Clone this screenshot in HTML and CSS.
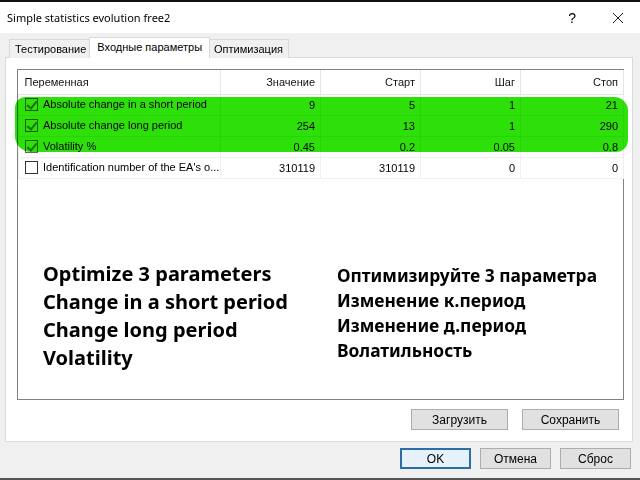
FILE: index.html
```html
<!DOCTYPE html>
<html lang="ru">
<head>
  <meta charset="UTF-8" />
  <title>Simple statistics evolution free2</title>
  <link rel="stylesheet" href="styles.css">
</head>
<body>
  <div class="titlebar">
    <span class="title">Simple statistics evolution free2</span>
    <span class="help">?</span>
    <svg class="close" width="12" height="12" viewBox="0 0 12 12"><path d="M1 1L11 11M11 1L1 11" stroke="#222" stroke-width="1"/></svg>
  </div>

  <div class="tabs">
    <div class="tab">Тестирование</div>
    <div class="tab active">Входные параметры</div>
    <div class="tab">Оптимизация</div>
  </div>

  <div class="panel">
    <div class="list">
      <table>
        <thead>
          <tr>
            <th class="name">Переменная</th>
            <th>Значение</th>
            <th>Старт</th>
            <th>Шаг</th>
            <th>Стоп</th>
          </tr>
        </thead>
        <tbody>
          <tr>
            <td class="name"><span class="chk on"></span>Absolute change in a short period</td>
            <td>9</td><td>5</td><td>1</td><td>21</td>
          </tr>
          <tr>
            <td class="name"><span class="chk on"></span>Absolute change long period</td>
            <td>254</td><td>13</td><td>1</td><td>290</td>
          </tr>
          <tr>
            <td class="name"><span class="chk on"></span>Volatility %</td>
            <td>0.45</td><td>0.2</td><td>0.05</td><td>0.8</td>
          </tr>
          <tr>
            <td class="name"><span class="chk"></span>Identification number of the EA's o...</td>
            <td>310119</td><td>310119</td><td>0</td><td>0</td>
          </tr>
        </tbody>
      </table>

      <div class="marker"></div>

      <div class="note">
        <div class="note-en">
          <div>Optimize 3 parameters</div>
          <div>Change in a short period</div>
          <div>Change long period</div>
          <div>Volatility</div>
        </div>
        <div class="note-ru">
          <div>Оптимизируйте 3 параметра</div>
          <div>Изменение к.период</div>
          <div>Изменение д.период</div>
          <div>Волатильность</div>
        </div>
      </div>
    </div>

    <div class="panel-buttons">
      <button class="btn">Загрузить</button>
      <button class="btn">Сохранить</button>
    </div>
  </div>

  <div class="footer">
    <button class="btn small default">OK</button>
    <button class="btn small">Отмена</button>
    <button class="btn small">Сброс</button>
  </div>

  <div class="bottom-edge"></div>
</body>
</html>
```

FILE: styles.css
```css
* { box-sizing: border-box; }

body {
  margin: 0;
  width: 640px;
  height: 480px;
  overflow: hidden;
  background: #f0f0f0;
  font-family: "Liberation Sans", Arial, sans-serif;
  font-size: 11px;
  color: #000;
  position: relative;
}

.titlebar {
  height: 33px;
  background: #fff;
  border-top: 2px solid #111;
  display: flex;
  align-items: center;
  padding-left: 7px;
}

.title {
  font-family: "Noto Sans", sans-serif;
  font-size: 11px;
  flex: 1;
}

.help {
  font-size: 14px;
  margin-right: 36px;
}

.close {
  margin-right: 16px;
}

.tabs {
  display: flex;
  align-items: flex-end;
  height: 25px;
  padding-left: 9px;
}

.tab {
  height: 19px;
  padding: 0 5px;
  line-height: 18px;
  border: 1px solid #d9d9d9;
  border-bottom: none;
  background: #f0f0f0;
  margin-right: -1px;
}

.tab.active {
  height: 21px;
  background: #fff;
  padding: 0 7px;
  position: relative;
  z-index: 1;
  margin: 0 -2px;
}

.panel {
  margin: -1px 7px 0 5px;
  height: 385px;
  background: #fff;
  border: 1px solid #d9d9d9;
  padding: 11px 8px 0 11px;
}

.list {
  position: relative;
  height: 331px;
  border: 1px solid #828282;
}

table {
  border-collapse: collapse;
  width: 606px;
  table-layout: fixed;
}

th, td {
  text-align: right;
  font-weight: normal;
  white-space: nowrap;
  overflow: hidden;
  padding: 0 5px;
}

th {
  height: 24px;
  border-right: 1px solid #e5e5e5;
  border-bottom: 1px solid #e5e5e5;
  color: #111;
}

th:nth-child(1) { width: 202px; }
th:nth-child(2), th:nth-child(3), th:nth-child(4) { width: 100px; }

td {
  height: 21px;
  border: 1px solid #f0f0f0;
  border-top: none;
}

th.name, td.name {
  text-align: left;
  padding-left: 6px;
}

.chk {
  display: inline-block;
  width: 13px;
  height: 13px;
  border: 1px solid #333;
  vertical-align: -3px;
  margin-right: 5px;
  background: #fff;
  position: relative;
}

.chk.on {
  border-color: #666;
}

.chk.on::after {
  content: "";
  position: absolute;
  left: 3px;
  top: 0;
  width: 4px;
  height: 8px;
  border: solid #888;
  border-width: 0 2px 2px 0;
  transform: rotate(40deg);
}

.marker {
  position: absolute;
  left: -3px;
  top: 27px;
  width: 613px;
  height: 55px;
  background: #2de00a;
  border-radius: 10px 14px 12px 16px;
  mix-blend-mode: multiply;
  pointer-events: none;
}

.note {
  display: flex;
  font-family: "Noto Sans", sans-serif;
  font-weight: bold;
  margin-top: 81px;
  padding-left: 25px;
}

.note-en {
  width: 294px;
  font-size: 20px;
  line-height: 28px;
}

.note-ru {
  font-size: 17.4px;
  line-height: 25px;
  padding-top: 3px;
}

.panel-buttons {
  display: flex;
  justify-content: flex-end;
  gap: 14px;
  margin-top: 9px;
  padding-right: 5px;
}

.btn {
  font-family: "Liberation Sans", Arial, sans-serif;
  font-size: 12px;
  width: 97px;
  height: 21px;
  background: #e1e1e1;
  border: 1px solid #adadad;
  padding: 0;
  color: #000;
}

.footer {
  display: flex;
  justify-content: flex-end;
  gap: 9px;
  padding: 6px 9px 0 0;
}

.btn.small {
  width: 71px;
  height: 21px;
}

.btn.default {
  border: 2px solid #2b6ea8;
  background: #e5f1fb;
}

.bottom-edge {
  position: absolute;
  left: 0;
  right: 0;
  bottom: 0;
  height: 2px;
  background: #555;
}
```
